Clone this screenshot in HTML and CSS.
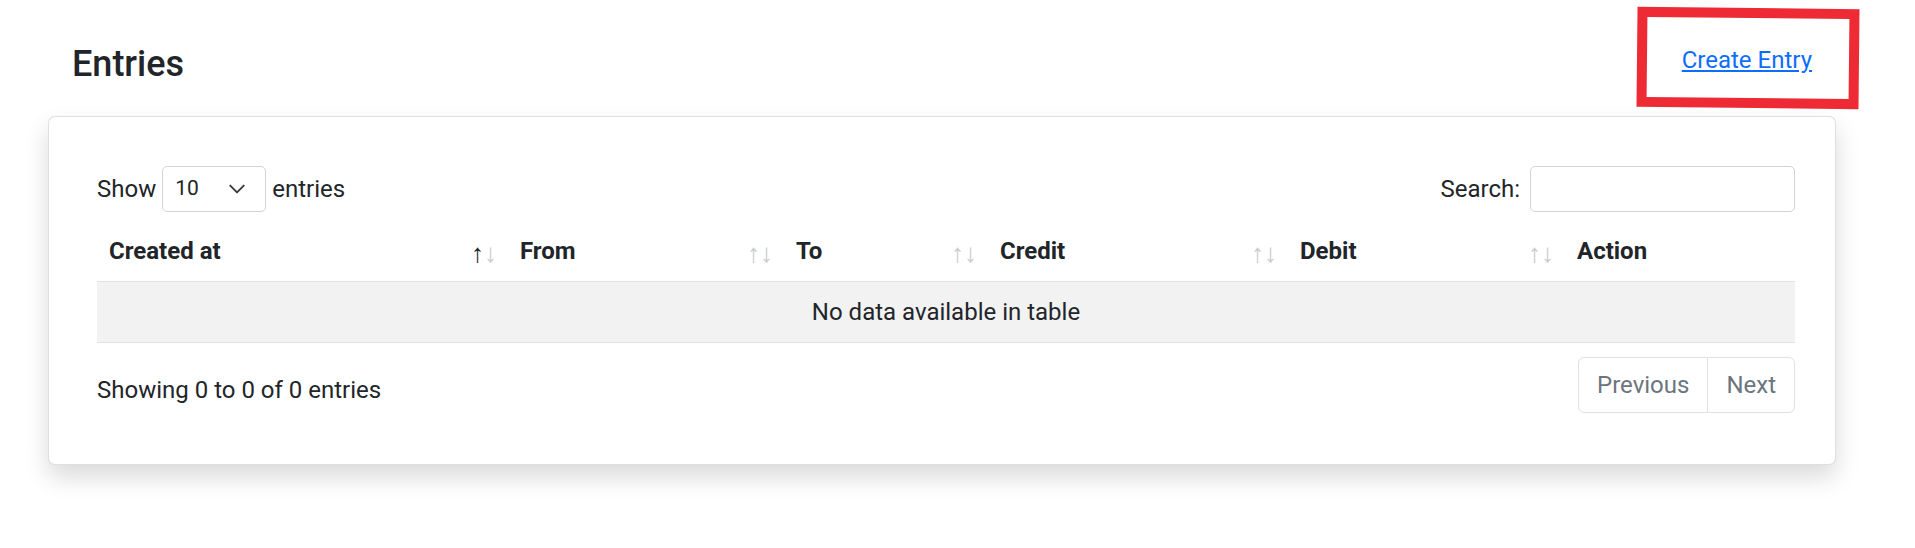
FILE: index.html
```html
<!DOCTYPE html>
<html lang="en">
<head>
<meta charset="utf-8">
<title>Entries</title>
<link rel="stylesheet" href="styles.css">
</head>
<body>
<div class="page">
  <div class="page-header">
    <h4 class="page-title">Entries</h4>
    <span class="create-wrap"><a class="create-link" href="#">Create Entry</a><span class="annot"></span></span>
  </div>
  <div class="card">
    <div class="controls">
      <label class="length">Show
        <span class="select-wrap">
          <select class="length-select"><option>10</option><option>25</option><option>50</option><option>100</option></select>
          <svg class="chev" viewBox="0 0 16 16" width="18" height="18"><path d="M2 5l6 6 6-6" fill="none" stroke="#343a40" stroke-width="1.7" stroke-linecap="round" stroke-linejoin="round"/></svg>
        </span>
        entries</label>
      <label class="filter">Search:<input class="search-input" type="search"></label>
    </div>
    <table class="dt">
      <colgroup>
        <col class="c1"><col class="c2"><col class="c3"><col class="c4"><col class="c5"><col class="c6">
      </colgroup>
      <thead>
        <tr>
          <th class="sorting asc">Created at</th>
          <th class="sorting">From</th>
          <th class="sorting">To</th>
          <th class="sorting">Credit</th>
          <th class="sorting">Debit</th>
          <th>Action</th>
        </tr>
      </thead>
      <tbody>
        <tr><td colspan="6" class="empty">No data available in table</td></tr>
      </tbody>
    </table>
    <div class="footer">
      <div class="info">Showing 0 to 0 of 0 entries</div>
      <ul class="pagination">
        <li class="page-item first"><a class="page-link">Previous</a></li>
        <li class="page-item last"><a class="page-link">Next</a></li>
      </ul>
    </div>
  </div>
</div>
</body>
</html>
```
FILE: styles.css
```css
* { box-sizing: border-box; }
html, body { margin: 0; background: #fff; }
body {
  font-family: Roboto, "Liberation Sans", sans-serif;
  font-size: 24px;
  line-height: 1.5;
  color: #212529;
}
.page { padding: 42px 79px 40px 48px; }
.page-header {
  display: flex;
  justify-content: space-between;
  align-items: flex-start;
  padding: 0 24px;
}
.page-title {
  margin: 0;
  padding-top: 1px;
  font-size: 36px;
  font-weight: 500;
  line-height: 1.2;
}
.create-wrap { position: relative; display: inline-block; }
.create-link { color: #0d6efd; text-decoration: underline; cursor: pointer; }
.annot {
  position: absolute;
  top: -34px; left: -45px; right: -47px; bottom: -30px;
  border: 10px solid #ee2a35;
  transform: rotate(0.6deg);
  pointer-events: none;
}
.card {
  margin-top: 30px;
  background: #fff;
  border: 1px solid rgba(0,0,0,.125);
  border-radius: 7px;
  box-shadow: 0 12px 24px rgba(0,0,0,.15);
  padding: 49px 40px 51px 48px;
}
.controls {
  display: flex;
  justify-content: space-between;
  align-items: center;
  height: 46px;
}
.length, .filter {
  display: flex;
  align-items: center;
  gap: 6px;
  font-weight: 400;
  white-space: nowrap;
}
.select-wrap { position: relative; display: inline-block; height: 46px; }
.length-select {
  -webkit-appearance: none;
  appearance: none;
  font-family: inherit;
  font-size: 21px;
  line-height: 1.5;
  color: #212529;
  width: 104px;
  height: 46px;
  padding: 6px 40px 6px 12px;
  border: 1px solid #ced4da;
  border-radius: 5px;
  background: #fff;
  margin: 0;
}
.chev {
  position: absolute;
  right: 20px;
  top: 50%;
  transform: translateY(-50%);
  pointer-events: none;
}
.filter { gap: 10px; }
.search-input {
  width: 265px;
  height: 46px;
  font-family: inherit;
  font-size: 21px;
  padding: 6px 12px;
  border: 1px solid #ced4da;
  border-radius: 5px;
  background: #fff;
  margin: 0;
}
.dt {
  width: 100%;
  table-layout: fixed;
  border-collapse: separate;
  border-spacing: 0;
  margin-top: 9px;
}
.c1 { width: 411px; }
.c2 { width: 276px; }
.c3 { width: 204px; }
.c4 { width: 300px; }
.c5 { width: 277px; }
.c6 { width: 230px; }
.dt th {
  position: relative;
  text-align: left;
  font-weight: 700;
  padding: 12px 12px;
  line-height: 36px;
  border-bottom: 1px solid #dee2e6;
}
.dt th.sorting { padding-right: 30px; }
.dt th.sorting::before,
.dt th.sorting::after {
  position: absolute;
  top: 19px;
  font-family: "Liberation Sans", "DejaVu Sans", sans-serif;
  font-weight: 400;
  font-size: 26px;
  line-height: 26px;
  color: #c9cacc;
}
.dt th.sorting::before { content: "\2191"; right: 24px; }
.dt th.sorting::after { content: "\2193"; right: 11px; }
.dt th.asc::before { color: #212529; }
.dt td {
  padding: 12px;
  line-height: 36px;
  border-bottom: 1px solid #dee2e6;
}
.dt td.empty { text-align: center; background: #f2f2f2; }
.footer {
  display: flex;
  justify-content: space-between;
  align-items: flex-start;
  margin-top: 14px;
}
.info { padding-top: 15px; line-height: 36px; }
.pagination {
  display: flex;
  list-style: none;
  margin: 0;
  padding: 0;
}
.page-link {
  display: block;
  padding: 9px 18px;
  line-height: 36px;
  color: #6c757d;
  background: #fff;
  border: 1px solid #dee2e6;
}
.page-item.last .page-link { margin-left: -1px; border-radius: 0 6px 6px 0; }
.page-item.first .page-link { border-radius: 6px 0 0 6px; }
```
